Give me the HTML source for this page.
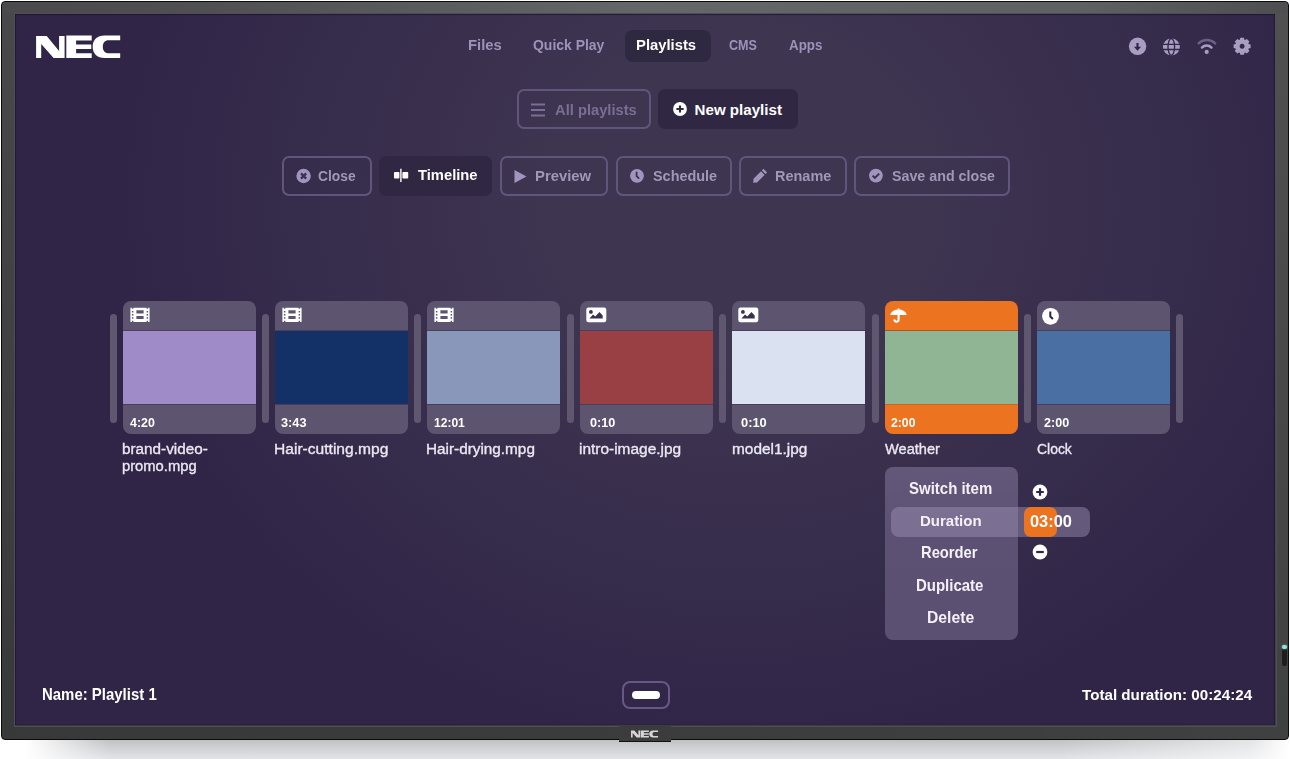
<!DOCTYPE html>
<html><head><meta charset="utf-8">
<style>
*{margin:0;padding:0;box-sizing:border-box}
html,body{width:1290px;height:759px;overflow:hidden;background:#fff;font-family:"Liberation Sans",sans-serif}
.abs{position:absolute}
#shadow{position:absolute;left:0;top:738px;width:1290px;height:21px;background:linear-gradient(#bdbdc0,#cfd0d3 45%,#e3e4e8);-webkit-mask-image:linear-gradient(to right,transparent 25px,#000 110px,#000 1060px,rgba(0,0,0,0.45) 1250px,transparent 1290px)}
#bezel{position:absolute;left:1px;top:1px;width:1288px;height:738.5px;border-radius:4px;background:linear-gradient(90deg,rgba(0,0,0,0.03),rgba(0,0,0,0) 30%,rgba(255,255,255,0.03)),linear-gradient(#4b4b4c 0px,#464647 200px,#404040 500px,#393a3a 738px);border:1.4px solid #0b0b0c}
#topstrip{position:absolute;left:3px;top:2.4px;width:1284px;height:10.6px;border-radius:3px 3px 0 0;background:linear-gradient(90deg,#4a4a4c 0%,#505052 16%,#646668 50%,#5e6061 84%,#4e4e50 100%)}
#screen{position:absolute;left:15px;top:14px;width:1260px;height:711px;overflow:hidden;box-shadow:inset 0 1px 1px rgba(20,15,30,0.5),inset 1px 0 1px rgba(20,15,30,0.4),inset -1px 0 1px rgba(20,15,30,0.4);
 background:radial-gradient(ellipse 625px 550px at 725px 186px,#3e3551 30%,#302547 100%)}
#screenedge{position:absolute;left:13.5px;top:12.5px;width:1263px;height:714px;border:1.5px solid #4f4d56}
.t{position:absolute;white-space:nowrap;line-height:1;transform-origin:0 0}
.btn{position:absolute;height:40px;border-radius:7px}
.ob{border:2px solid #62557b}
.db{background:#302843}
.card{position:absolute;top:301px;width:133px;height:133px;border-radius:8px;background:#5d5470;overflow:hidden}
.card .th{position:absolute;left:0;top:30px;width:133px;height:74px;border-bottom:1px solid #463b5a;box-shadow:0 -1px 0 rgba(40,30,60,0.35)}
.card .ic{position:absolute;left:7px;top:6px}
.sep{position:absolute;top:314px;width:7px;height:109px;border-radius:4px;background:#5f566f}
</style></head><body>
<div id="shadow"></div><div id="bezel"></div><div id="topstrip"></div><div id="screenedge"></div><div id="screen"></div>
<svg class="abs" style="left:30px;top:30px" width="100" height="35" viewBox="30 30 100 35">
 <path fill="#fff" d="M36.1 35.9H46.7L59.1 50.9V35.9H64.6V58.1H53.6L41.2 43.9V58.1H36.1Z"/>
 <path fill="#fff" d="M66.3 35.6H91.7V40.6H76.1V44.4H91.3V48.9H76.1V53.2H91.7V58.1H66.3Z"/>
 <path fill="#fff" d="M120.2 35.6V40.2H108.6C104.9 40.2 102.8 42.6 102.8 46.7C102.8 50.8 104.9 53.2 108.6 53.2H120.2V58.1H104.6C97 58.1 92.7 53.8 92.7 46.85C92.7 39.9 97 35.6 104.6 35.6Z"/>
</svg>
<div class="abs" style="left:625px;top:30px;width:86px;height:32px;border-radius:8px;background:#2f2841"></div>
<svg class="abs" style="left:1120px;top:30px" width="140" height="34" viewBox="1120 30 140 34">
 <circle cx="1137.6" cy="46.3" r="8.7" fill="#a99ec2"/>
 <path fill="#30264a" d="M1136.45 43h2.1v3.7h2.5l-3.55 4l-3.55-4h2.5z"/>
 <circle cx="1171.4" cy="46.9" r="8.5" fill="#a99ec2"/>
 <g fill="none" stroke="#30264a" stroke-width="1.3">
  <ellipse cx="1171.3" cy="46.9" rx="3.3" ry="8.4"/>
  <path d="M1162.8 44.4h17.2M1162.8 49.5h17.2"/>
 </g>
 <g fill="none" stroke-linecap="round">
  <path d="M1198.6 43.4a12 12 0 0 1 16.6 0" stroke="#6d5f88" stroke-width="2.4"/>
  <path d="M1201.9 47.6a6.6 6.6 0 0 1 9.6 0" stroke="#a99ec2" stroke-width="2.4"/>
 </g>
 <circle cx="1206.7" cy="51.9" r="2.1" fill="#a99ec2"/>
 <path transform="translate(1242.1 46.3)" fill="#a99ec2" fill-rule="evenodd" d="M6.51 -2.30 L8.51 -1.81 L8.51 1.81 L6.51 2.30 L6.23 2.97 L7.30 4.73 L4.73 7.30 L2.97 6.23 L2.30 6.51 L1.81 8.51 L-1.81 8.51 L-2.30 6.51 L-2.97 6.23 L-4.73 7.30 L-7.30 4.73 L-6.23 2.97 L-6.51 2.30 L-8.51 1.81 L-8.51 -1.81 L-6.51 -2.30 L-6.23 -2.97 L-7.30 -4.73 L-4.73 -7.30 L-2.97 -6.23 L-2.30 -6.51 L-1.81 -8.51 L1.81 -8.51 L2.30 -6.51 L2.97 -6.23 L4.73 -7.30 L7.30 -4.73 L6.23 -2.97Z M0 -2.5A2.5 2.5 0 1 0 0.01 -2.5Z"/>
</svg>
<div class="btn ob" style="left:517px;top:89px;width:134px"></div>
<svg class="abs" style="left:531px;top:103px" width="15" height="14" viewBox="0 0 15 14"><path d="M0 1.5h14M0 7h14M0 12.5h14" stroke="#7b6d96" stroke-width="2.2"/></svg>
<div class="btn db" style="left:658px;top:89px;width:140px"></div>
<svg class="abs" style="left:672px;top:101.4px" width="16" height="16" viewBox="0 0 16 16"><circle cx="8" cy="8" r="6.9" fill="#fff"/><path d="M8 4.4v7.2M4.4 8h7.2" stroke="#2e2641" stroke-width="2.1"/></svg>
<div class="btn ob" style="left:282px;top:156px;width:90px"></div>
<svg class="abs" style="left:296px;top:168px" width="16" height="16" viewBox="0 0 16 16"><circle cx="7.6" cy="8" r="7.2" fill="#a295bd"/><path d="M5 5.4l5.2 5.2M10.2 5.4l-5.2 5.2" stroke="#3a3050" stroke-width="2.2"/></svg>
<div class="btn db" style="left:379px;top:156px;width:113px"></div>
<svg class="abs" style="left:390px;top:165px" width="22" height="20" viewBox="390 165 22 20"><rect x="394" y="172" width="5.4" height="6.6" rx="0.8" fill="#fff"/><rect x="402.4" y="172" width="5.8" height="6.6" rx="0.8" fill="#fff"/><path d="M400.9 168.8v13.2" stroke="#fff" stroke-width="1.4"/></svg>
<div class="btn ob" style="left:500px;top:156px;width:108px"></div>
<svg class="abs" style="left:514px;top:169px" width="14" height="15" viewBox="0 0 14 15"><path fill="#a295bd" d="M0.5 1L12.5 7.5L0.5 14z"/></svg>
<div class="btn ob" style="left:616px;top:156px;width:116px"></div>
<svg class="abs" style="left:629px;top:168px" width="16" height="16" viewBox="0 0 16 16"><circle cx="8" cy="7.8" r="6.9" fill="#a295bd"/><path d="M7.6 3.8v4.4l2.6 2.4" fill="none" stroke="#3a3050" stroke-width="1.8"/></svg>
<div class="btn ob" style="left:739px;top:156px;width:108px"></div>
<svg class="abs" style="left:753px;top:168px" width="15" height="15" viewBox="0 0 15 15"><path fill="#a295bd" d="M10.5 0.8l3.6 3.6l-1.6 1.6l-3.6-3.6zM8 3.3l3.6 3.6l-7.5 7.5l-3.9 0.4l0.3-4z"/></svg>
<div class="btn ob" style="left:854px;top:156px;width:156px"></div>
<svg class="abs" style="left:868px;top:168px" width="16" height="16" viewBox="0 0 16 16"><circle cx="7.9" cy="7.6" r="6.9" fill="#a295bd"/><path d="M4.6 7.6l2.3 2.3l4.3-4.3" fill="none" stroke="#3a3050" stroke-width="2"/></svg>
<div class="sep" style="left:109.5px"></div>
<div class="card" style="left:122.5px;background:#5d5470"><svg class="ic" width="21" height="16" viewBox="0 0 21 16"><path fill="#fff" fill-rule="evenodd" d="M0.4 0.7h19.2v14.2H0.4z M1.9 0.7h1.5v1.1H1.9z M1.9 3.9h1.5v1.5H1.9z M1.9 7.1h1.5v1.5H1.9z M1.9 10.3h1.5v1.5H1.9z M1.9 13.8h1.5v1.1H1.9z M16.6 0.7h1.5v1.1h-1.5z M16.6 3.9h1.5v1.5h-1.5z M16.6 7.1h1.5v1.5h-1.5z M16.6 10.3h1.5v1.5h-1.5z M16.6 13.8h1.5v1.1h-1.5z M6.4 3.2h7.2v3.3H6.4z M6.4 9h7.2v2.9H6.4z"/></svg><div class="th" style="background:#9e8bc8;border-bottom-color:#483e5b"></div></div>
<div class="sep" style="left:261.9px"></div>
<div class="card" style="left:274.9px;background:#5d5470"><svg class="ic" width="21" height="16" viewBox="0 0 21 16"><path fill="#fff" fill-rule="evenodd" d="M0.4 0.7h19.2v14.2H0.4z M1.9 0.7h1.5v1.1H1.9z M1.9 3.9h1.5v1.5H1.9z M1.9 7.1h1.5v1.5H1.9z M1.9 10.3h1.5v1.5H1.9z M1.9 13.8h1.5v1.1H1.9z M16.6 0.7h1.5v1.1h-1.5z M16.6 3.9h1.5v1.5h-1.5z M16.6 7.1h1.5v1.5h-1.5z M16.6 10.3h1.5v1.5h-1.5z M16.6 13.8h1.5v1.1h-1.5z M6.4 3.2h7.2v3.3H6.4z M6.4 9h7.2v2.9H6.4z"/></svg><div class="th" style="background:#133166;border-bottom-color:#483e5b"></div></div>
<div class="sep" style="left:414.3px"></div>
<div class="card" style="left:427.3px;background:#5d5470"><svg class="ic" width="21" height="16" viewBox="0 0 21 16"><path fill="#fff" fill-rule="evenodd" d="M0.4 0.7h19.2v14.2H0.4z M1.9 0.7h1.5v1.1H1.9z M1.9 3.9h1.5v1.5H1.9z M1.9 7.1h1.5v1.5H1.9z M1.9 10.3h1.5v1.5H1.9z M1.9 13.8h1.5v1.1H1.9z M16.6 0.7h1.5v1.1h-1.5z M16.6 3.9h1.5v1.5h-1.5z M16.6 7.1h1.5v1.5h-1.5z M16.6 10.3h1.5v1.5h-1.5z M16.6 13.8h1.5v1.1h-1.5z M6.4 3.2h7.2v3.3H6.4z M6.4 9h7.2v2.9H6.4z"/></svg><div class="th" style="background:#8997ba;border-bottom-color:#483e5b"></div></div>
<div class="sep" style="left:566.7px"></div>
<div class="card" style="left:579.7px;background:#5d5470"><svg class="ic" style="left:6px" width="21" height="16" viewBox="0 0 21 16"><rect x="0.3" y="0.5" width="20" height="14.7" rx="2.2" fill="#fff"/><circle cx="4.9" cy="4.9" r="1.9" fill="#3a3050"/><path d="M3.4 11.4h13.3V8.4l-3.2-3.4l-4.3 4.4l-2.1-1.8z" fill="#3a3050"/></svg><div class="th" style="background:#984044;border-bottom-color:#483e5b"></div></div>
<div class="sep" style="left:719.1px"></div>
<div class="card" style="left:732.1px;background:#5d5470"><svg class="ic" style="left:6px" width="21" height="16" viewBox="0 0 21 16"><rect x="0.3" y="0.5" width="20" height="14.7" rx="2.2" fill="#fff"/><circle cx="4.9" cy="4.9" r="1.9" fill="#3a3050"/><path d="M3.4 11.4h13.3V8.4l-3.2-3.4l-4.3 4.4l-2.1-1.8z" fill="#3a3050"/></svg><div class="th" style="background:#dae1f0;border-bottom-color:#483e5b"></div></div>
<div class="sep" style="left:871.5px"></div>
<div class="card" style="left:884.5px;background:#ec731f"><svg class="ic" style="left:5.8px" width="21" height="17" viewBox="0 0 21 17"><path fill="#fff" d="M12.6 7.4a8.6 6.8 0 0 0 -8.3 -5.8a8.6 6.8 0 0 0 -8.3 5.8" transform="translate(4.2 0.6)"/><path d="M8.6 1.2l0 1" stroke="#fff" stroke-width="1.4"/><path d="M8.6 7v5.6a2.1 2.1 0 0 1 -4.2 0" fill="none" stroke="#fff" stroke-width="2.1"/></svg><div class="th" style="background:#90b595;border-bottom-color:#d0661a"></div></div>
<div class="sep" style="left:1023.9px"></div>
<div class="card" style="left:1036.9px;background:#5d5470"><svg class="ic" style="left:5.5px" width="21" height="18" viewBox="0 0 21 18"><circle cx="8.5" cy="9.3" r="8.4" fill="#fff"/><path d="M8.3 4.6v4.9l2.6 2.5" fill="none" stroke="#2d2540" stroke-width="2"/></svg><div class="th" style="background:#4a6fa3;border-bottom-color:#483e5b"></div></div>
<div class="sep" style="left:1176.4px"></div>
<div class="abs" style="left:884.5px;top:467px;width:133px;height:172.5px;border-radius:8px;background:linear-gradient(#63587a,#5c5173 40%,#5b5072)"></div>
<div class="abs" style="left:891px;top:507px;width:199px;height:30px;border-radius:8px;background:rgba(160,148,185,0.45)"></div>
<div class="abs" style="left:1023.5px;top:507px;width:33px;height:29.5px;border-radius:7px;background:#ec731f"></div>
<svg class="abs" style="left:1032px;top:484px" width="16" height="16" viewBox="0 0 16 16"><circle cx="8" cy="8" r="7.4" fill="#fff"/><path d="M8 4.2v7.6M4.2 8h7.6" stroke="#30264a" stroke-width="2.2"/></svg>
<svg class="abs" style="left:1032px;top:544px" width="16" height="16" viewBox="0 0 16 16"><circle cx="8" cy="8" r="7.4" fill="#fff"/><path d="M4.2 8h7.6" stroke="#30264a" stroke-width="2.2"/></svg>
<div class="abs" style="left:622px;top:681px;width:48px;height:28px;border-radius:8px;border:2px solid #665985"></div>
<div class="abs" style="left:632px;top:691px;width:28px;height:8px;border-radius:4px;background:#fff"></div>
<div class="abs" style="left:619px;top:725px;width:52px;height:17px;background:#3c3c3c;border-bottom:1.5px solid #111"></div>
<svg class="abs" style="left:625px;top:726px" width="40" height="15" viewBox="0 0 40 15"><g fill="#d6d6d6" transform="translate(6 4.5) scale(0.322 0.315) translate(-36.1 -35.6)">
 <path d="M36.1 35.9H46.7L59.1 50.9V35.9H64.6V58.1H53.6L41.2 43.9V58.1H36.1Z"/>
 <path d="M66.3 35.6H91.7V40.6H76.1V44.4H91.3V48.9H76.1V53.2H91.7V58.1H66.3Z"/>
 <path d="M120.2 35.6V40.2H108.6C104.9 40.2 102.8 42.6 102.8 46.7C102.8 50.8 104.9 53.2 108.6 53.2H120.2V58.1H104.6C97 58.1 92.7 53.8 92.7 46.85C92.7 39.9 97 35.6 104.6 35.6Z"/></g></svg>
<div class="abs" style="left:1282px;top:645px;width:4.5px;height:21px;border-radius:2.2px;background:#1e1e20"></div>
<div class="abs" style="left:1282px;top:644.5px;width:4.5px;height:4.5px;border-radius:50%;background:#8fe3d8;box-shadow:0 0 2px #6fd0c4"></div>
<div class="t" id="files" style="left:468.39px;top:36.60px;font-size:15.12px;font-weight:bold;color:#9d92b8;transform:scaleX(0.9780);">Files</div>
<div class="t" id="quick" style="left:533.43px;top:36.70px;font-size:15.12px;font-weight:bold;color:#9d92b8;transform:scaleX(0.9235);">Quick Play</div>
<div class="t" id="playl" style="left:636.00px;top:37.20px;font-size:15.12px;font-weight:bold;color:#ffffff;transform:scaleX(0.9803);">Playlists</div>
<div class="t" id="cms" style="left:728.97px;top:37.61px;font-size:14.83px;font-weight:bold;color:#9d92b8;transform:scaleX(0.8491);">CMS</div>
<div class="t" id="apps" style="left:788.53px;top:37.61px;font-size:14.83px;font-weight:bold;color:#9d92b8;transform:scaleX(0.8990);">Apps</div>
<div class="t" id="allpl" style="left:554.63px;top:102.61px;font-size:14.83px;font-weight:bold;color:#7b6e95;transform:scaleX(0.9926);">All playlists</div>
<div class="t" id="newpl" style="left:694.58px;top:102.00px;font-size:15.12px;font-weight:bold;color:#ffffff;transform:scaleX(1.0000);">New playlist</div>
<div class="t" id="close" style="left:317.90px;top:168.61px;font-size:14.53px;font-weight:bold;color:#a197b6;transform:scaleX(0.9526);">Close</div>
<div class="t" id="timel" style="left:418.01px;top:168.41px;font-size:14.53px;font-weight:bold;color:#ffffff;transform:scaleX(1.0159);">Timeline</div>
<div class="t" id="prev" style="left:534.86px;top:168.61px;font-size:14.53px;font-weight:bold;color:#a197b6;transform:scaleX(1.0230);">Preview</div>
<div class="t" id="sched" style="left:653.30px;top:168.61px;font-size:14.53px;font-weight:bold;color:#a197b6;transform:scaleX(0.9936);">Schedule</div>
<div class="t" id="renam" style="left:775.45px;top:168.51px;font-size:14.53px;font-weight:bold;color:#a197b6;transform:scaleX(0.9975);">Rename</div>
<div class="t" id="save" style="left:891.71px;top:168.80px;font-size:14.83px;font-weight:bold;color:#a197b6;transform:scaleX(0.9615);">Save and close</div>
<div class="t" id="m1" style="left:908.71px;top:480.60px;font-size:16.72px;font-weight:bold;color:#f4f1f8;transform:scaleX(0.8972);">Switch item</div>
<div class="t" id="m2" style="left:919.87px;top:513.60px;font-size:14.97px;font-weight:bold;color:#f4f1f8;transform:scaleX(1.0008);">Duration</div>
<div class="t" id="m3" style="left:920.83px;top:545.21px;font-size:15.99px;font-weight:bold;color:#f4f1f8;transform:scaleX(0.9224);">Reorder</div>
<div class="t" id="m4" style="left:916.19px;top:576.70px;font-size:16.28px;font-weight:bold;color:#f4f1f8;transform:scaleX(0.9207);">Duplicate</div>
<div class="t" id="m5" style="left:926.92px;top:610.31px;font-size:16.72px;font-weight:bold;color:#f4f1f8;transform:scaleX(0.9398);">Delete</div>
<div class="t" id="dur" style="left:1030.17px;top:513.00px;font-size:16.28px;font-weight:bold;color:#ffffff;transform:scaleX(1.0083);">03:00</div>
<div class="t" id="name" style="left:41.69px;top:686.00px;font-size:16.28px;font-weight:bold;color:#ffffff;transform:scaleX(0.9193);">Name: Playlist 1</div>
<div class="t" id="total" style="left:1082.41px;top:686.81px;font-size:15.26px;font-weight:bold;color:#ffffff;transform:scaleX(0.9954);">Total duration: 00:24:24</div>
<div class="t" id="d0" style="left:129.50px;top:416.60px;font-size:12.35px;font-weight:bold;color:#ffffff;transform:scaleX(1.0052);">4:20</div>
<div class="t" id="d1" style="left:281.45px;top:416.60px;font-size:12.35px;font-weight:bold;color:#ffffff;transform:scaleX(1.0325);">3:43</div>
<div class="t" id="d2" style="left:434.10px;top:416.60px;font-size:12.35px;font-weight:bold;color:#ffffff;transform:scaleX(0.9763);">12:01</div>
<div class="t" id="d3" style="left:589.56px;top:416.60px;font-size:12.35px;font-weight:bold;color:#ffffff;transform:scaleX(1.0276);">0:10</div>
<div class="t" id="d4" style="left:740.52px;top:416.60px;font-size:12.35px;font-weight:bold;color:#ffffff;transform:scaleX(1.0428);">0:10</div>
<div class="t" id="d5" style="left:891.03px;top:416.60px;font-size:12.35px;font-weight:bold;color:#ffffff;transform:scaleX(0.9893);">2:00</div>
<div class="t" id="d6" style="left:1043.75px;top:416.60px;font-size:12.35px;font-weight:bold;color:#ffffff;transform:scaleX(1.0188);">2:00</div>
<div class="t" id="l0" style="left:122.08px;top:440.60px;font-size:15.26px;font-weight:normal;color:#ece8f3;transform:scaleX(1.0014);-webkit-text-stroke:0.35px currentColor;">brand-video-</div>
<div class="t" id="l1" style="left:274.11px;top:440.60px;font-size:15.26px;font-weight:normal;color:#ece8f3;transform:scaleX(1.0222);-webkit-text-stroke:0.35px currentColor;">Hair-cutting.mpg</div>
<div class="t" id="l2" style="left:426.25px;top:440.60px;font-size:15.26px;font-weight:normal;color:#ece8f3;transform:scaleX(1.0038);-webkit-text-stroke:0.35px currentColor;">Hair-drying.mpg</div>
<div class="t" id="l3" style="left:579.38px;top:440.60px;font-size:15.26px;font-weight:normal;color:#ece8f3;transform:scaleX(1.0128);-webkit-text-stroke:0.35px currentColor;">intro-image.jpg</div>
<div class="t" id="l4" style="left:732.23px;top:440.60px;font-size:15.26px;font-weight:normal;color:#ece8f3;transform:scaleX(1.0098);-webkit-text-stroke:0.35px currentColor;">model1.jpg</div>
<div class="t" id="l5" style="left:884.94px;top:440.60px;font-size:15.26px;font-weight:normal;color:#ece8f3;transform:scaleX(0.9575);-webkit-text-stroke:0.35px currentColor;">Weather</div>
<div class="t" id="l6" style="left:1037.37px;top:440.60px;font-size:15.26px;font-weight:normal;color:#ece8f3;transform:scaleX(0.9136);-webkit-text-stroke:0.35px currentColor;">Clock</div>
<div class="t" id="l0b" style="left:122.39px;top:457.60px;font-size:15.26px;font-weight:normal;color:#ece8f3;transform:scaleX(0.9674);-webkit-text-stroke:0.35px currentColor;">promo.mpg</div>
</body></html>
